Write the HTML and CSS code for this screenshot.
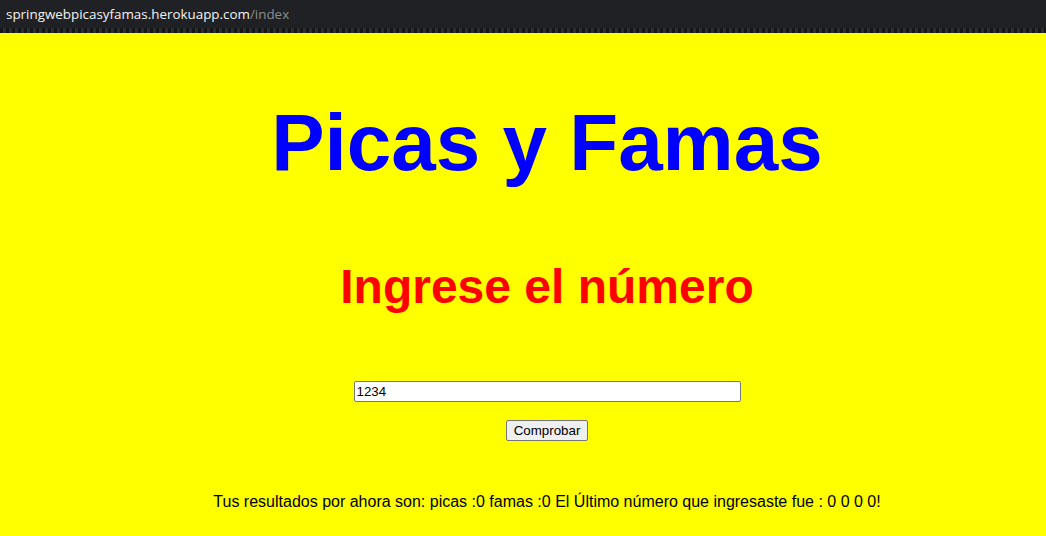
FILE: index.html
```html
<!DOCTYPE html>
<html lang="es">
<head>
<meta charset="utf-8">
<title>Picas y Famas</title>
<link rel="stylesheet" href="styles.css">
</head>
<body>
<div class="urlbar">
  <span class="host">springwebpicasyfamas.herokuapp.com</span><span class="path">/index</span>
</div>
<div class="edge"></div>
<main class="page">
  <h1 class="title">Picas y Famas</h1>
  <h2 class="prompt">Ingrese el número</h2>
  <form class="guess">
    <input class="guess-input" type="text" value="1234">
    <button class="guess-btn" type="button">Comprobar</button>
  </form>
  <p class="result">Tus resultados por ahora son: picas :0 famas :0 El Último número que ingresaste fue : 0 0 0 0!</p>
</main>
</body>
</html>
```
FILE: styles.css
```css
html, body {
  margin: 0;
  padding: 0;
  height: 100%;
}
body {
  background: #ffff00;
  font-family: "Liberation Sans", Arial, sans-serif;
  display: flex;
  flex-direction: column;
  overflow: hidden;
}
.urlbar {
  height: 28px;
  background: #202124;
  display: flex;
  align-items: center;
  padding-left: 6px;
  padding-bottom: 1px;
  box-sizing: border-box;
  font-family: "Open Sans", "Noto Sans", sans-serif;
  font-size: 13.4px;
  flex-shrink: 0;
}
.host { color: #f1f3f4; }
.path { color: #8a8c90; }
.edge {
  height: 5px;
  flex-shrink: 0;
  background-color: #202124;
  background-image: repeating-linear-gradient(90deg, #151618 0 3px, #2c2d30 3px 6px);
}
.page {
  flex: 1;
  display: flex;
  flex-direction: column;
  align-items: center;
  padding-left: 48px;
  text-align: center;
}
.title {
  margin: 64px 0 0;
  font-size: 80px;
  line-height: 92px;
  font-weight: bold;
  color: #0000ff;
}
.prompt {
  margin: 70px 0 0;
  font-size: 48px;
  line-height: 55px;
  font-weight: bold;
  color: #ff0000;
}
.guess {
  margin: 67px 0 0;
  display: flex;
  flex-direction: column;
  align-items: center;
  gap: 18px;
}
.guess-input {
  box-sizing: border-box;
  width: 387px;
  height: 21px;
  font-family: "Liberation Sans", Arial, sans-serif;
  font-size: 13.333px;
  padding: 1px 2px;
  border: 1px solid #767676;
  border-radius: 2px;
  background: #fff;
  color: #000;
}
.guess-btn {
  box-sizing: border-box;
  width: 82px;
  height: 21px;
  font-family: "Liberation Sans", Arial, sans-serif;
  font-size: 13.333px;
  padding: 1px 6px;
  border: 1px solid #767676;
  border-radius: 2px;
  background: #efefef;
  color: #000;
}
.result {
  margin: 52px 0 0;
  font-size: 16px;
  line-height: 18px;
  color: #000;
}
```
